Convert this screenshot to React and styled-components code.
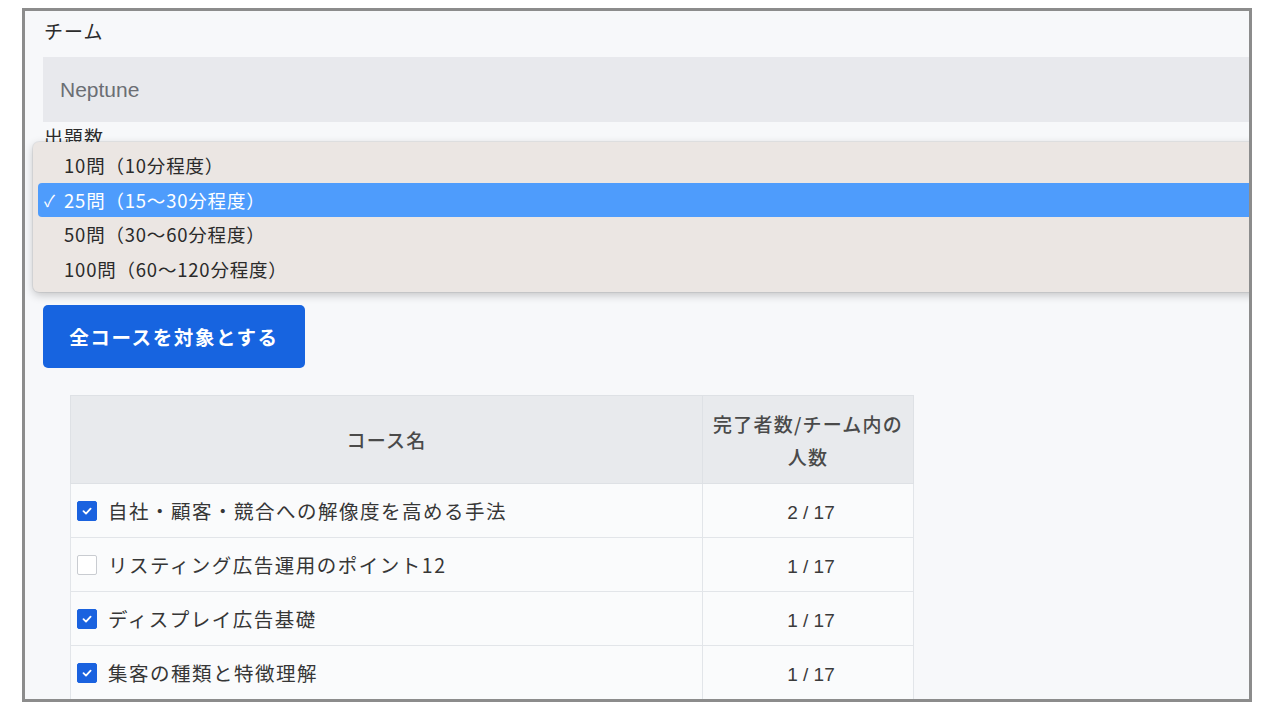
import React from 'react';
import styled, { createGlobalStyle } from 'styled-components';

const GlobalStyle = createGlobalStyle`
  html, body {
    margin: 0;
    padding: 0;
    background: #ffffff;
  }
  body {
    font-family: "Liberation Sans", "Noto Sans CJK JP", sans-serif;
    color: #333;
  }
`;

const Frame = styled.div`
  box-sizing: border-box;
  margin: 8px 0 0 22px;
  width: 1230px;
  height: 694px;
  border: 3px solid #8c8c8c;
  background: #f7f8fa;
  overflow: hidden;
  position: relative;
`;

const Content = styled.div`
  padding: 8px 0 0 18px;
  width: 1260px;
`;

const Label = styled.div`
  font-family: "Noto Sans CJK JP", sans-serif;
  font-size: 19px;
  line-height: 24px;
  letter-spacing: 1px;
  color: #2b2b2b;
  padding-left: 1px;
  margin-top: ${(p) => p.$top || 0}px;
`;

const Input = styled.div`
  margin-top: 14px;
  height: 65px;
  background: #e8e9ed;
  display: flex;
  align-items: center;
  padding-left: 17px;
  font-size: 21px;
  color: #6b6e74;
`;

const SelectField = styled.div`
  position: relative;
  height: 156px;
`;

const Menu = styled.ul`
  position: absolute;
  left: -10px;
  top: -7px;
  width: 1300px;
  margin: 0;
  padding: 6px 0;
  list-style: none;
  background: #ebe6e3;
  border-radius: 6px;
  box-shadow: 0 3px 10px rgba(0, 0, 0, 0.22), 0 0 0 1px rgba(0, 0, 0, 0.06);
`;

const MenuItem = styled.li`
  position: relative;
  height: 34.6px;
  margin: 0 5px;
  padding-left: 26px;
  display: flex;
  align-items: center;
  font-family: "Noto Sans CJK JP", sans-serif;
  font-size: 18.5px;
  letter-spacing: 0.8px;
  color: ${(p) => (p.$selected ? '#ffffff' : '#2a2a2a')};
  background: ${(p) => (p.$selected ? '#4e9cfc' : 'transparent')};
  border-radius: 4px;
`;

const Check = styled.span`
  position: absolute;
  left: 6px;
  font-size: 16px;
  color: #fff;
`;

const PrimaryButton = styled.button`
  display: flex;
  align-items: center;
  justify-content: center;
  width: 262px;
  height: 63px;
  border: none;
  border-radius: 5px;
  background: #1764e0;
  color: #fff;
  font-family: "Noto Sans CJK JP", sans-serif;
  font-weight: 700;
  font-size: 19.5px;
  letter-spacing: 1.6px;
  cursor: pointer;
`;

const Table = styled.table`
  margin: 27px 0 0 27px;
  border-collapse: collapse;
  width: 843px;
  table-layout: fixed;
  font-family: "Noto Sans CJK JP", sans-serif;
`;

const HeadCell = styled.th`
  height: 87px;
  padding: 0 4px;
  background: #e8eaed;
  border: 1px solid #dee1e5;
  font-weight: 500;
  font-size: 19px;
  line-height: 33px;
  letter-spacing: 1.2px;
  color: #4a4a4a;
  text-align: center;
`;

const Cell = styled.td`
  height: 53px;
  padding: 0 0 0 6px;
  border: 1px solid #e2e5e9;
  background: #fafbfc;
  font-size: 19.5px;
  letter-spacing: 1.5px;
  color: #363636;
  text-align: ${(p) => (p.$center ? 'center' : 'left')};
`;

const CourseLabel = styled.label`
  display: flex;
  align-items: center;
  gap: 11px;
`;

const Box = styled.span`
  box-sizing: border-box;
  width: 20px;
  height: 20px;
  border-radius: 2px;
  display: inline-flex;
  align-items: center;
  justify-content: center;
  background: ${(p) => (p.$checked ? '#1a62df' : '#ffffff')};
  border: 1px solid ${(p) => (p.$checked ? '#1a62df' : '#c9ccd1')};
`;

const Count = styled.span`
  font-family: "Liberation Sans", sans-serif;
  font-size: 19px;
  letter-spacing: 0;
  color: #3a3a3a;
`;

const options = [
  '10問（10分程度）',
  '25問（15〜30分程度）',
  '50問（30〜60分程度）',
  '100問（60〜120分程度）',
];

const courses = [
  { name: '自社・顧客・競合への解像度を高める手法', count: '2 / 17', checked: true },
  { name: 'リスティング広告運用のポイント12', count: '1 / 17', checked: false },
  { name: 'ディスプレイ広告基礎', count: '1 / 17', checked: true },
  { name: '集客の種類と特徴理解', count: '1 / 17', checked: true },
];

const Checkbox = ({ checked }) => (
  <Box $checked={checked}>
    {checked && (
      <svg width="12" height="12" viewBox="0 0 12 12">
        <path d="M2.5 6.2 L5 8.6 L9.6 3.6" fill="none" stroke="#fff" strokeWidth="1.8" strokeLinecap="round" strokeLinejoin="round" />
      </svg>
    )}
  </Box>
);

export default function App() {
  return (
    <>
      <GlobalStyle />
      <Frame>
        <Content>
          <Label>チーム</Label>
          <Input>Neptune</Input>
          <Label $top={3}>出題数</Label>
          <SelectField>
            <Menu>
              {options.map((o, i) => (
                <MenuItem key={o} $selected={i === 1}>
                  {i === 1 && <Check>✓</Check>}
                  {o}
                </MenuItem>
              ))}
            </Menu>
          </SelectField>
          <PrimaryButton>全コースを対象とする</PrimaryButton>
          <Table>
            <colgroup>
              <col style={{ width: 632 }} />
              <col style={{ width: 211 }} />
            </colgroup>
            <thead>
              <tr>
                <HeadCell>コース名</HeadCell>
                <HeadCell>
                  完了者数/チーム内の
                  <br />
                  人数
                </HeadCell>
              </tr>
            </thead>
            <tbody>
              {courses.map((c) => (
                <tr key={c.name}>
                  <Cell>
                    <CourseLabel>
                      <Checkbox checked={c.checked} />
                      {c.name}
                    </CourseLabel>
                  </Cell>
                  <Cell $center>
                    <Count>{c.count}</Count>
                  </Cell>
                </tr>
              ))}
            </tbody>
          </Table>
        </Content>
      </Frame>
    </>
  );
}
